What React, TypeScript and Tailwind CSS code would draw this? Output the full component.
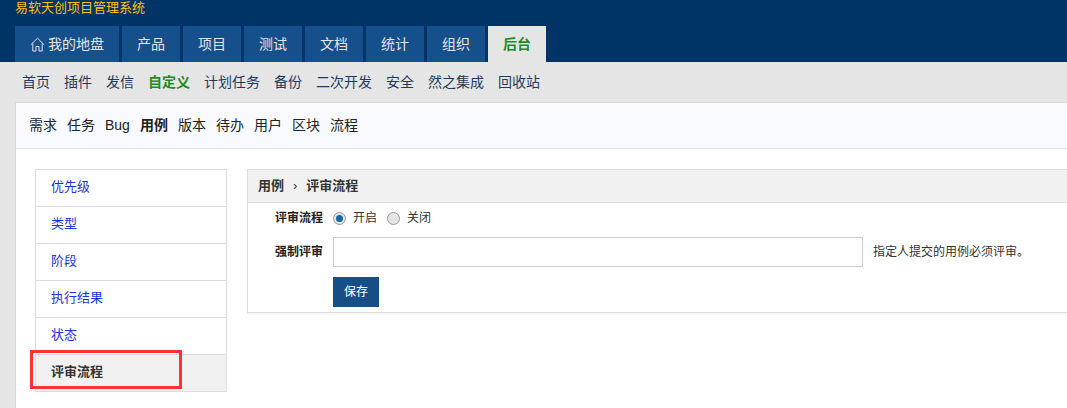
import React from 'react';

const mainNav = ['产品', '项目', '测试', '文档', '统计', '组织'];
const subNav = ['首页', '插件', '发信', '自定义', '计划任务', '备份', '二次开发', '安全', '然之集成', '回收站'];
const moduleNav = ['需求', '任务', 'Bug', '用例', '版本', '待办', '用户', '区块', '流程'];
const sideItems = ['优先级', '类型', '阶段', '执行结果', '状态'];

const font = "font-['Liberation_Sans','Noto_Sans_CJK_SC',sans-serif]";

function HomeIcon() {
  return (
    <svg width="15" height="15" viewBox="0 0 15 15" fill="none" stroke="currentColor" strokeWidth="1">
      <path d="M0.8 7.8 L7.5 1.2 L14.2 7.8" />
      <path d="M2.8 6.5 V14 H6 V9.5 H9 V14 H12.2 V6.5" />
    </svg>
  );
}

function Radio({ checked, label }: { checked?: boolean; label: string }) {
  return (
    <label className="flex items-center gap-[7px] text-[12px] text-[#333]">
      <span className="w-[13px] h-[13px] rounded-full border border-[#9a9a9a] bg-[#e4e4e4] flex items-center justify-center">
        {checked && <span className="w-[7px] h-[7px] rounded-full bg-[#14689f]" />}
      </span>
      {label}
    </label>
  );
}

export default function App() {
  return (
    <div className={`${font} w-[1067px] h-[408px] overflow-hidden bg-[#e5e5e5] flex flex-col`}>
      <header className="h-[62px] shrink-0 bg-[#003366] flex flex-col">
        <div className="h-[26px] pl-[15px] text-[13px] leading-[15px] text-[#ffc20e]">易软天创项目管理系统</div>
        <nav className="flex pl-[15px] gap-[3px] h-[36px]">
          <a className="w-[104px] bg-[#154f8c] text-[#e5e5e5] text-[14px] flex items-center justify-center gap-[3px]">
            <HomeIcon />
            我的地盘
          </a>
          {mainNav.map((item) => (
            <a key={item} className="w-[58px] bg-[#154f8c] text-[#e5e5e5] text-[14px] flex items-center justify-center">
              {item}
            </a>
          ))}
          <a className="w-[58px] bg-[#e5e5e5] text-[#228b22] text-[14px] font-bold flex items-center justify-center">后台</a>
        </nav>
      </header>

      <div className="h-[40px] shrink-0 flex items-center gap-[14px] pl-[22px] text-[14px] text-[#1f3a5f]">
        {subNav.map((item) => (
          <a key={item} className={item === '自定义' ? 'font-bold text-[#228b22]' : ''}>
            {item}
          </a>
        ))}
      </div>

      <main className="flex-1 ml-[15px] bg-white border-t border-l border-[#d8d8d8] flex flex-col overflow-hidden">
        <div className="h-[46px] shrink-0 bg-[#f8faff] border-b border-[#e0e0e0] flex items-center gap-[10px] pl-[13px] text-[14px] text-[#222]">
          {moduleNav.map((item) => (
            <a key={item} className={item === '用例' ? 'font-bold' : ''}>
              {item}
            </a>
          ))}
        </div>

        <div className="flex items-start pl-[19px] pt-[20px] gap-[20px]">
          <aside className="relative w-[192px] shrink-0 border border-[#dddddd] flex flex-col">
            {sideItems.map((item) => (
              <a key={item} className="h-[37px] flex items-center pl-[15px] pb-[2px] text-[13px] text-[#1c35d0] border-b border-[#dddddd]">
                {item}
              </a>
            ))}
            <a className="h-[36px] flex items-center pl-[15px] pb-[2px] text-[13px] font-bold text-[#333] bg-[#f1f1f1]">评审流程</a>
            <div className="absolute left-[-6px] top-[180px] w-[152px] h-[39px] border-[3px] border-[#ff3333]" />
          </aside>

          <section className="w-[840px] shrink-0 h-[144px] border border-[#dddddd] shadow-[0_1px_2px_rgba(0,0,0,0.06)] flex flex-col">
            <div className="h-[33px] shrink-0 bg-[#f1f1f1] border-b border-[#dddddd] flex items-center pl-[10px] text-[13px] font-bold text-[#333]">
              用例
              <span className="mx-[9px] font-normal">›</span>
              评审流程
            </div>
            <div className="flex items-center h-[29px] pt-[1px]">
              <span className="w-[75px] text-right text-[12px] font-bold text-[#222]">评审流程</span>
              <div className="flex items-center gap-[10px] ml-[10px]">
                <Radio checked label="开启" />
                <Radio label="关闭" />
              </div>
            </div>
            <div className="flex items-center mt-[5px]">
              <span className="w-[75px] text-right text-[12px] font-bold text-[#222]">强制评审</span>
              <input className="ml-[10px] w-[530px] h-[30px] border border-[#cccccc] bg-white" />
              <span className="ml-[10px] text-[12px] text-[#333]">指定人提交的用例必须评审。</span>
            </div>
            <div className="pl-[85px] mt-[10px]">
              <button className="w-[46px] h-[30px] bg-[#164f86] text-white text-[12px]">保存</button>
            </div>
          </section>
        </div>
      </main>
    </div>
  );
}
